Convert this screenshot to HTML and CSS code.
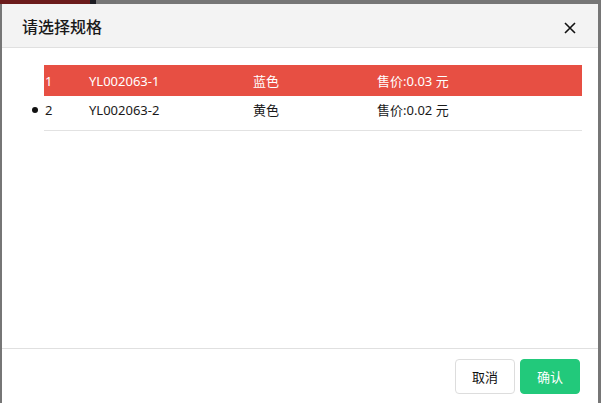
FILE: index.html
```html
<!DOCTYPE html>
<html lang="zh">
<head>
  <meta charset="UTF-8">
  <title>请选择规格</title>
  <link rel="stylesheet" href="styles.css">
</head>
<body>

  <div class="backdrop">
    <div class="backdrop-strip"></div>
  </div>

  <div class="modal">
    <div class="modal-header">
      <h3>请选择规格</h3>
      <svg class="close" width="12" height="12" viewBox="0 0 12 12">
        <path d="M1 1 L11 11 M11 1 L1 11" stroke="#111" stroke-width="1.6" fill="none"/>
      </svg>
    </div>

    <div class="modal-body">
      <ul class="spec-list">
        <li class="spec active">
          <span class="no">1</span>
          <span class="code">YL002063-1</span>
          <span class="color">蓝色</span>
          <span class="price">售价:0.03 元</span>
        </li>
        <li class="spec">
          <i class="dot"></i>
          <span class="no">2</span>
          <span class="code">YL002063-2</span>
          <span class="color">黄色</span>
          <span class="price">售价:0.02 元</span>
        </li>
      </ul>
    </div>

    <div class="modal-footer">
      <button class="btn">取消</button>
      <button class="btn btn-ok">确认</button>
    </div>
  </div>

</body>
</html>
```

FILE: styles.css
```css
* {
  box-sizing: border-box;
}

body {
  margin: 0;
  width: 601px;
  height: 403px;
  overflow: hidden;
  background: #767676;
  font-family: "Noto Sans", "Noto Sans CJK SC", sans-serif;
  color: #111;
}

.backdrop-strip {
  width: 96px;
  height: 4px;
  background: #6b1b1b;
  border-right: 6px solid #1c1c22;
}

.modal {
  position: absolute;
  top: 4px;
  left: 2px;
  width: 596px;
  height: 402px;
  background: #fff;
  display: flex;
  flex-direction: column;
}

.modal-header {
  height: 44px;
  background: #f3f3f3;
  border-bottom: 1px solid #e0e0e0;
  display: flex;
  align-items: center;
  justify-content: space-between;
  padding: 0 22px 0 20px;
}

.modal-header h3 {
  margin: 0;
  font-size: 16px;
  font-weight: 500;
  color: #1a1a1a;
}

.close {
  margin-top: 4px;
}

.modal-body {
  flex: 1;
  padding: 17px 16px 0 42px;
}

.spec-list {
  list-style: none;
  margin: 0;
  padding: 0;
}

.spec {
  position: relative;
  display: flex;
  align-items: center;
  height: 35px;
  padding-bottom: 7px;
  font-size: 13px;
  color: #1a1a1a;
  border-bottom: 1px solid #e2e2e2;
}

.spec.active {
  height: 31px;
  padding-bottom: 0;
  background: #e74f43;
  color: #fff;
  border-bottom: none;
}

.dot {
  position: absolute;
  left: -12px;
  top: 11px;
  width: 6px;
  height: 6px;
  border-radius: 50%;
  background: #111;
}

.no { width: 45px; padding-left: 1px; }
.code { width: 164px; }
.color { width: 124px; }

.modal-footer {
  height: 58px;
  border-top: 1px solid #e0e0e0;
  display: flex;
  justify-content: flex-end;
  align-items: flex-start;
  gap: 5px;
  padding: 10px 18px 0 0;
}

.btn {
  width: 60px;
  height: 35px;
  border: 1px solid #ddd;
  border-radius: 4px;
  background: #fff;
  font-family: inherit;
  font-size: 13px;
  color: #111;
}

.btn-ok {
  background: #22c97b;
  border-color: #22c97b;
  color: #fff;
}
```
